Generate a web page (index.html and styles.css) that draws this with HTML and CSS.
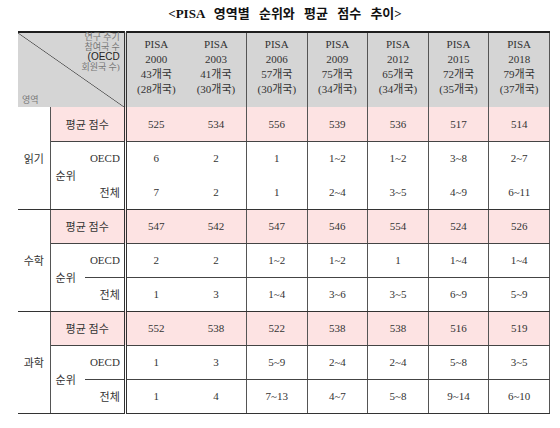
FILE: index.html
```html
<!DOCTYPE html>
<html lang="ko">
<head>
<meta charset="utf-8">
<title>PISA 영역별 순위와 평균 점수 추이</title>
<link rel="stylesheet" href="styles.css">
</head>
<body>
<h1 class="title">&lt;PISA 영역별 순위와 평균 점수 추이&gt;</h1>
<table class="grid">
  <colgroup>
    <col class="c-area"><col class="c-rank"><col class="c-sub">
    <col class="c-data"><col class="c-data"><col class="c-data"><col class="c-data"><col class="c-data"><col class="c-data"><col class="c-data">
  </colgroup>
  <thead>
    <tr>
      <th colspan="3" class="corner">
        <div class="corner-box">
          <div class="corner-top">연구 주기<br>참여국 수<br><span class="oecd">(OECD</span><br>회원국 수)</div>
          <div class="corner-bottom">영역</div>
        </div>
      </th>
      <th class="nosep">PISA<br>2000<br>43개국<br>(28개국)</th>
      <th>PISA<br>2003<br>41개국<br>(30개국)</th>
      <th>PISA<br>2006<br>57개국<br>(30개국)</th>
      <th>PISA<br>2009<br>75개국<br>(34개국)</th>
      <th>PISA<br>2012<br>65개국<br>(34개국)</th>
      <th>PISA<br>2015<br>72개국<br>(35개국)</th>
      <th>PISA<br>2018<br>79개국<br>(37개국)</th>
    </tr>
  </thead>
  <tbody class="sec">
    <tr class="avg">
      <td rowspan="3" class="area">읽기</td>
      <td colspan="2" class="avg-label">평균 점수</td>
      <td class="nosep">525</td><td>534</td><td>556</td><td>539</td><td>536</td><td>517</td><td>514</td>
    </tr>
    <tr class="oecd-row">
      <td rowspan="2" class="rank">순위</td>
      <td class="sub">OECD</td>
      <td class="nosep">6</td><td>2</td><td>1</td><td>1~2</td><td>1~2</td><td>3~8</td><td>2~7</td>
    </tr>
    <tr class="all-row">
      <td class="sub">전체</td>
      <td class="nosep">7</td><td>2</td><td>1</td><td>2~4</td><td>3~5</td><td>4~9</td><td>6~11</td>
    </tr>
  </tbody>
  <tbody class="sec split">
    <tr class="avg">
      <td rowspan="3" class="area">수학</td>
      <td colspan="2" class="avg-label">평균 점수</td>
      <td class="nosep">547</td><td>542</td><td>547</td><td>546</td><td>554</td><td>524</td><td>526</td>
    </tr>
    <tr class="oecd-row">
      <td rowspan="2" class="rank">순위</td>
      <td class="sub">OECD</td>
      <td class="nosep">2</td><td>2</td><td>1~2</td><td>1~2</td><td>1</td><td>1~4</td><td>1~4</td>
    </tr>
    <tr class="all-row">
      <td class="sub">전체</td>
      <td class="nosep">1</td><td>3</td><td>1~4</td><td>3~6</td><td>3~5</td><td>6~9</td><td>5~9</td>
    </tr>
  </tbody>
  <tbody class="sec split">
    <tr class="avg">
      <td rowspan="3" class="area">과학</td>
      <td colspan="2" class="avg-label">평균 점수</td>
      <td class="nosep">552</td><td>538</td><td>522</td><td>538</td><td>538</td><td>516</td><td>519</td>
    </tr>
    <tr class="oecd-row">
      <td rowspan="2" class="rank">순위</td>
      <td class="sub">OECD</td>
      <td class="nosep">1</td><td>3</td><td>5~9</td><td>2~4</td><td>2~4</td><td>5~8</td><td>3~5</td>
    </tr>
    <tr class="all-row">
      <td class="sub">전체</td>
      <td class="nosep">1</td><td>4</td><td>7~13</td><td>4~7</td><td>5~8</td><td>9~14</td><td>6~10</td>
    </tr>
  </tbody>
</table>
</body>
</html>
```
FILE: styles.css
```css
html, body {
  margin: 0;
  padding: 0;
  background: #ffffff;
}
body {
  font-family: "Liberation Serif", "Noto Sans CJK KR", serif;
  color: #333;
}
.title {
  margin: 0 0 9px 0;
  padding: 6px 0 0 10px;
  font-size: 13px;
  line-height: 16px;
  font-weight: bold;
  text-align: center;
  word-spacing: 6px;
  color: #111;
}
.grid {
  margin-left: 18px;
  width: 532px;
  border-collapse: collapse;
  table-layout: fixed;
  border-top: 2px solid #1e1e1e;
  border-bottom: 1px solid #333;
}
.c-area { width: 32px; }
.c-rank { width: 35px; }
.c-sub { width: 40px; }
.c-data { width: 60.4px; }

.grid th,
.grid td {
  padding: 0;
  text-align: center;
  vertical-align: middle;
  font-size: 11px;
  font-weight: normal;
}
.grid thead th {
  background: #d5d5d5;
  height: 74px;
  line-height: 15px;
  padding-bottom: 6px;
  box-sizing: border-box;
  border-right: 1px solid #555;
  color: #333;
}
.grid thead th.nosep,
.grid td.nosep {
  border-right: none;
}
.grid thead th.corner {
  padding: 0;
  border-right: 3px double #333;
  background: linear-gradient(to top right, #d5d5d5 calc(50% - 0.7px), #555 50%, #d5d5d5 calc(50% + 0.7px));
}
.corner-box {
  height: 74px;
  display: flex;
  flex-direction: column;
  justify-content: space-between;
  font-size: 9px;
  line-height: 9.5px;
  color: #777;
}
.corner-top {
  text-align: right;
  padding: 0 4px 0 0;
}
.oecd {
  font-family: "Liberation Sans", "Noto Sans CJK KR", sans-serif;
  color: #222;
  font-size: 10px;
}
.corner-bottom {
  text-align: left;
  padding: 0 0 2px 4px;
}

.grid td {
  height: 34px;
  box-sizing: border-box;
  border-right: 1px solid #555;
}
.grid tr.avg td {
  background: #fde3e3;
  border-bottom: 1px solid #444;
}
.grid tr.avg td.area {
  background: #ffffff;
  border-bottom: 1px solid #333;
  border-right: 1px solid #555;
  text-align: center;
}
.grid td.avg-label,
.grid td.sub {
  border-right: 3px double #333;
}
.grid td.rank {
  border-right: none;
  text-align: left;
  padding-left: 5px;
  border-bottom: 1px solid #333;
}
.grid td.sub {
  text-align: right;
  padding-right: 4px;
}
.grid tr.all-row td {
  border-bottom: 1px solid #333;
}
.grid .split tr.oecd-row td {
  border-bottom: 1px solid #444;
}
.grid .split tr.oecd-row td.rank {
  border-bottom: 1px solid #333;
}
```
